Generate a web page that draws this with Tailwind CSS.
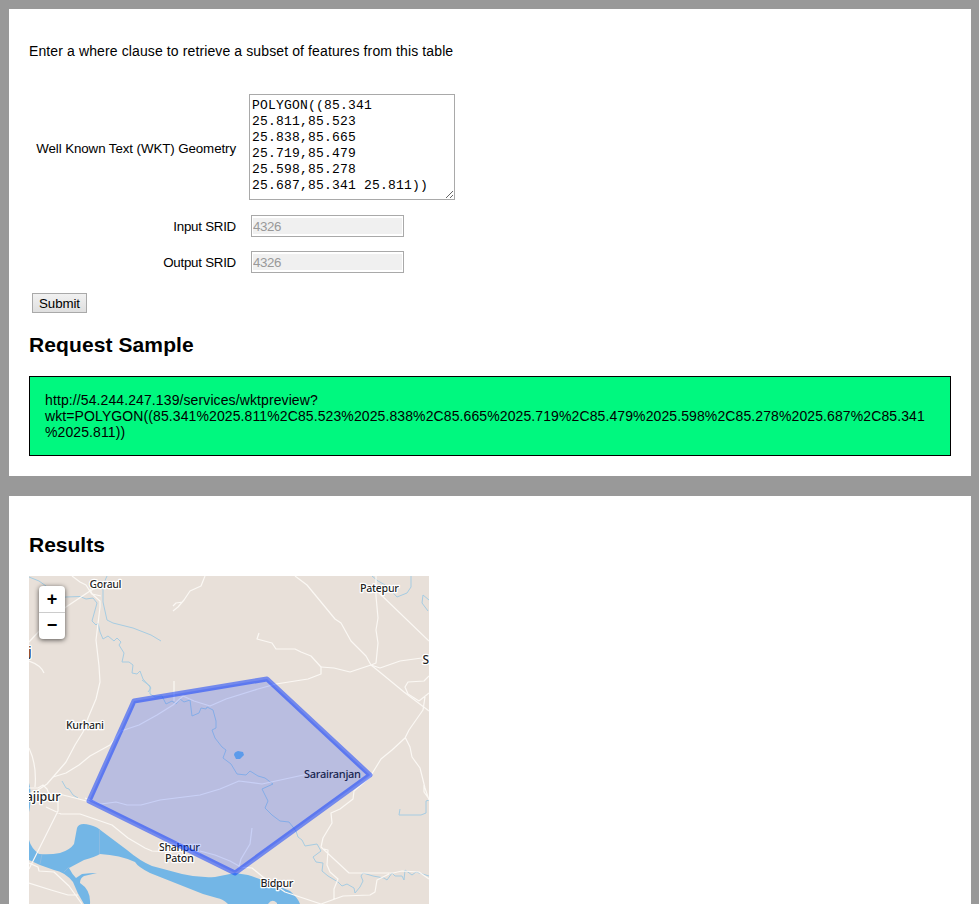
<!DOCTYPE html>
<html lang="en">
<head>
<meta charset="utf-8">
<title>WKT Preview</title>
<script src="https://cdn.jsdelivr.net/npm/@tailwindcss/browser@4"></script>
</head>
<body class="bg-[#999] h-[904px] overflow-hidden p-[9px] pr-2 pb-0 text-black font-['Liberation_Sans',Arial,sans-serif] text-sm leading-4">
<section class="bg-white h-[467px] px-5 pt-[34px]">
  <p id="intro" class="whitespace-nowrap tracking-[0.115px]">Enter a where clause to retrieve a subset of features from this table</p>
  <form class="mt-[35px] text-[13.333px]">
    <div class="flex items-center h-[106px]">
      <label for="wkt" class="w-[207px] pt-[3px] text-right whitespace-nowrap tracking-[-0.09px]">Well Known Text (WKT) Geometry</label>
      <textarea id="wkt" class="ml-[13px] w-[206px] h-[106px] border border-[#a9a9a9] p-0.5 pt-[3px] resize overflow-auto bg-white font-['Liberation_Mono','Courier_New',monospace] text-[13px] tracking-[0.198px] leading-4">POLYGON((85.341 25.811,85.523 25.838,85.665 25.719,85.479 25.598,85.278 25.687,85.341 25.811))</textarea>
    </div>
    <div class="flex items-center mt-[15px] h-[22px]">
      <label for="in" class="w-[207px] pt-px text-right tracking-[-0.25px]">Input SRID</label>
      <input id="in" disabled value="4326" class="ml-[15px] w-[153px] h-[22px] border border-[#a9a9a9] px-px py-0.5 bg-[#f0f0f0] bg-clip-content text-[#999] tracking-[-0.4px]">
    </div>
    <div class="flex items-center mt-[14px] h-[22px]">
      <label for="out" class="w-[207px] pt-px text-right tracking-[-0.25px]">Output SRID</label>
      <input id="out" disabled value="4326" class="ml-[15px] w-[153px] h-[22px] border border-[#a9a9a9] px-px py-0.5 bg-[#f0f0f0] bg-clip-content text-[#999] tracking-[-0.4px]">
    </div>
    <button type="button" class="block mt-5 ml-[3px] w-[55px] h-5 border border-[#a9a9a9] bg-linear-to-b from-[#f1f1f1] to-[#dfdfdf] pt-px leading-[18px] tracking-[-0.1px]">Submit</button>
  </form>
  <h2 class="mt-5 text-[21px] leading-6 font-bold tracking-[0.1px]">Request Sample</h2>
  <div class="mt-[19px] h-20 border border-black bg-[#00f87f] p-[15px] whitespace-nowrap tracking-[0.104px]">http://54.244.247.139/services/wktpreview?<br>wkt=POLYGON((85.341%2025.811%2C85.523%2025.838%2C85.665%2025.719%2C85.479%2025.598%2C85.278%2025.687%2C85.341<br>%2025.811))</div>
</section>
<section class="bg-white mt-5 h-[408px] px-5 pt-[37px]">
  <h2 class="text-[21px] leading-6 font-bold">Results</h2>
  <div class="relative mt-[19px] w-[400px] h-[328px] overflow-hidden">
    <svg class="block" width="400" height="328" viewBox="29 576 400 328" fill="none">
      <rect x="29" y="576" width="400" height="328" fill="#e8e0d9"/>
      <!-- rivers and lakes -->
      <g fill="#73b6e6">
        <path d="M29 783q3 10 1 24l-1 5z"/>
        <path d="M29 840Q31 848 39 854Q50 855 60 853Q70 850 74 844L77 828Q79 822 90 825Q97 827 99 829L127 850Q140 861 152 866L182 874Q198 878 215 877L235 873L248 875Q270 882 290 891Q298 898 300 904H228Q223 899 217 898L203 894L150 873Q138 867 135 862Q120 855 100 854Q95 857 84 860L69 868Q72 874 76 878L82 874Q90 873 97 873L84 876Q80 878 80 883Q91 890 90 904H84Q77 893 73 882Q65 872 54 870L40 865L29 860z"/>
        <path d="M234 755q0-3 4-4l5 1 1 3-4 4h-4z"/>
      </g>
      <path d="M268 904q4-6 9-1v1z" fill="#e8e0d9"/>
      <path d="M99.500 829v25M42 854l-2 10M69 867l-5 5" stroke="#95bde0" stroke-width=".7"/>
      <!-- streams -->
      <g stroke="#a6cce2" stroke-width="1" stroke-linejoin="round">
        <path d="M29 577L39 581L46 586L60 598L66 597L80 596.500L86 599L93 598L97 603L92 621L96 625L98 623L100 632L103 639L108 636L114 641L117 638L121 642L119 645L124 653L122 662L129 662L133 665L132 673L137 674L140 671L143 679L151 688L148 692"/>
        <path d="M107 576L103 585V602L107 620L113 623L133 628L151 635L161 641"/>
        <path d="M142 680L150 686L150 694L155 697L162 696L166 704L172 701L176 704L180 699L184 702L190 700L192 716L199 713L201 708L206 709L207 707L213 710L216 721V728L212 730L215 738L222 747L226 750L223 758L231 764L237 774L246 775L250 771L258 776L265 778L273 784L262 789L268 801L265 808L272 815L280 821L289 822L296 831L298 837L302 840L305 846L311 845L317 844L321 851L313 857L316 862L323 863L322 871L328 876L338 882L342 886L347 884L354 888L355 893L360 887L363 881L361 876L363 873L373 876L384 878L387 880L392 873L395 876L402 876L404 880L405 870L412 875L416 872L429 876"/>
        <path d="M372 576L378 581L387 586L397 597L407 593L411 587V576M429 600L423 595L422 603L428 611M400 809L399 815L421 815L426 813L426 801L429 800M62 781L66 788L69 789L73 795L78 798"/>
      </g>
      <!-- roads -->
      <g stroke="#fbf8f4" stroke-width="1.200" stroke-linejoin="round">
        <path d="M72 576L80 582L86 585L91 593L100 601V607L96 640L99 666L100 682L96 699L88 718L83 732L75 745L66 762L47 784L38 790L29 794"/>
        <path d="M29 642L42 628L66 607L90 591L101 585M90 589L92 594L101 596M29 661Q41 665 44 673M29 748Q37 765 35 787M29 788L38 788L43 785L47 789L49 794L58 799L58 811L29 869M59 794L75 798L90 802M46 807L61 814L80 814L112 825L128 838L145 848L152 851L173 852M53 777L66 773L79 765L90 756L110 745L121 731L139 725L157 715L173 705L183 696L194 701L210 706L226 699L258 689L276 684L308 679L321 674V667L311 656L301 652L295 649L276 649L272 643L257 639L259 633"/>
        <path d="M29 863L38 867L39 871L54 872L69 886L82 904M29 883L51 890L68 895L78 895M85 798L101 804L116 802L127 805L141 805L160 800L200 795L220 789L239 781L262 784L285 779L308 774"/>
        <path d="M174 681V692V701M205 576L201 586L190 591L184 600L178 607L173 611M173 606L176 603L183 602M295 576L307 585L335 619L341 623L351 641L366 656L371 665L376 669L404 692L429 711"/>
        <path d="M376 576V596L378 618L376 630L378 643L376 663L371 665L350 672L334 668L321 667M376 590L429 641M371 665L380 668L400 661L429 657M429 676L424 681L408 682L405 687L408 694L419 701L429 693M425 697L423 710L409 730L405 738L392 750L381 759L370 777L354 791L353 799L340 809L331 813L332 823L323 838L321 847L349 873H393L402 871L419 872L429 879M405 737L410 747L412 757L420 768L425 788L429 800M424 785V792L429 799M324 849L328 850L327 865L330 872L338 879L334 889L334 899M321 904L343 896L370 895L375 892L377 880L389 874M252 828L250 844L241 859L239 867L252 868L263 877L285 892L321 904M200 851L215 855L230 861L239 866M173 851Q190 846 200 854"/>
      </g>
      <!-- place labels -->
      <g class="font-['Noto_Sans','Open_Sans',sans-serif]" fill="#222" font-weight="500" stroke="#fff" stroke-width="2.500" stroke-linejoin="round" paint-order="stroke" font-size="11" text-anchor="middle">
        <text x="105.500" y="588" textLength="32">Goraul</text>
        <text x="379.500" y="592" textLength="39">Patepur</text>
        <text x="85" y="729" textLength="38">Kurhani</text>
        <text x="332.500" y="778" textLength="57" stroke="none">Sarairanjan</text>
        <text x="179.500" y="851" textLength="41">Shahpur</text>
        <text x="179.500" y="862" textLength="29">Paton</text>
        <text x="277" y="887" textLength="33">Bidpur</text>
        <text x="31.500" y="656" font-size="12" text-anchor="end">j</text>
        <text x="422.500" y="664" font-size="12" text-anchor="start">S</text>
        <text x="60.500" y="801" font-size="12.500" text-anchor="end">ajipur</text>
      </g>
      <path d="M134 701L267 679L370 775L235 873L89 801z" fill="#0033ff" fill-opacity=".2" stroke="#0033ff" stroke-opacity=".5" stroke-width="5" stroke-linejoin="round"/>
    </svg>
    <div class="absolute left-[10px] top-[10px] w-[26px] h-[53px] rounded bg-white shadow-[0_1px_5px_rgba(0,0,0,0.65)] flex flex-col text-lg font-bold text-center">
      <a class="h-[27px] border-b border-[#ccc] leading-[26px]">+</a>
      <a class="h-[26px] leading-[24px]">−</a>
    </div>
  </div>
</section>
</body>
</html>
